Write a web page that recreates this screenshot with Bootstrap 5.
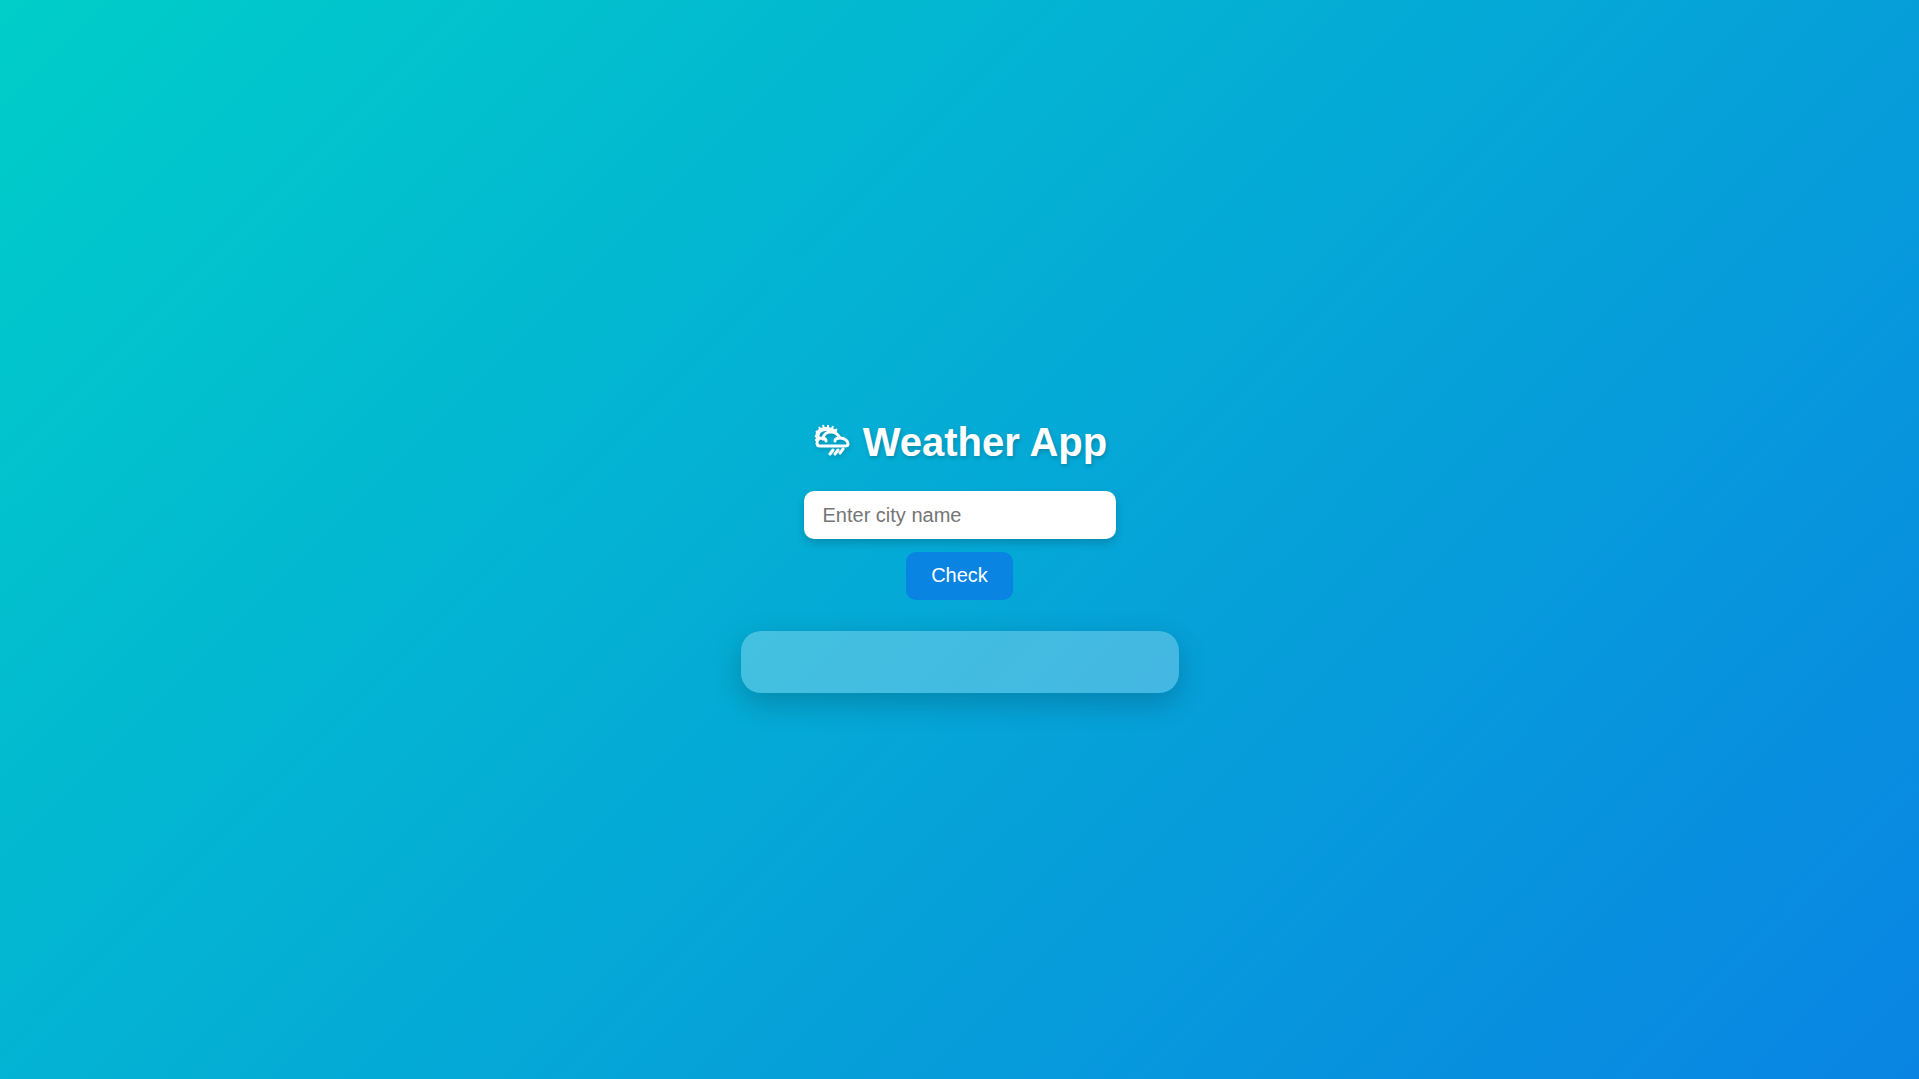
<!DOCTYPE html>
<html lang="en">
<head>
<meta charset="utf-8">
<meta name="viewport" content="width=device-width, initial-scale=1">
<title>Weather App</title>
<link href="https://cdn.jsdelivr.net/npm/bootstrap@5.3.0/dist/css/bootstrap.min.css" rel="stylesheet">
<style>
body { font-family: "Liberation Sans", Arial, sans-serif; background: linear-gradient(135deg, #00cec9, #0984e3); }
.app-title { font-size: 40px; line-height: 46px; margin: 32px 0 26px; text-shadow: 1px 2px 4px rgba(0,0,0,.2); }
.app-title svg { width: 40px; height: 40px; margin-right: 11px; filter: drop-shadow(1px 2px 2px rgba(0,0,0,.15)); }
.search-form { gap: 13px; margin-bottom: 31px; }
.city-input, .check-btn { font-size: 20px; line-height: 24px; border-radius: 10px; }
.city-input { width: 312px; max-width: 100%; padding: 12px 19px; box-shadow: 0 4px 8px rgba(0,0,0,.18); }
.city-input::placeholder { color: #757575; }
.check-btn { padding: 11px 25px 13px; background: #0984e3; }
.check-btn:hover { background: #0769b5; }
.result-panel { width: 438px; max-width: 100%; padding: 31px; border-radius: 20px; background: rgba(255,255,255,.25); box-shadow: 0 10px 30px rgba(0,0,0,.2); }
</style>
</head>
<body>
<main class="min-vh-100 d-flex flex-column align-items-center justify-content-center text-white">
  <h1 class="app-title d-flex align-items-center fw-bold">
    <svg viewBox="0 0 40 40" fill="none" stroke="#fff" stroke-linecap="round" stroke-linejoin="round" aria-hidden="true">
      <path d="M6 16C4 11 8 7 14 7c4 0 7 1 9 3" stroke-width="4"/>
      <path d="M6 18H3M5 15l-2-1M6 11L4 9M9 8L7 5M12 6l-1-3M16 6V3M20 7l1-3M23 9l2-2" stroke-width="2" stroke-linecap="butt"/>
      <path d="M11 17c0-4 3-7 8-7 4 0 7 2 9 6 5 0 8 3 8 6 0 1-1 2-3 2H8c-2 0-3-1-3-3 0-3 2-5 5-5s4 1 4 3M23 19c0-2 2-3 5-3" stroke-width="3"/>
      <path d="M21 28l-3 4M26 28l-3 4M31 27l-3 4" stroke-width="3"/>
    </svg>
    <span>Weather App</span>
  </h1>
  <form class="search-form d-flex flex-column align-items-center">
    <input class="city-input form-control border-0" id="city" type="text" placeholder="Enter city name" aria-label="City name">
    <button class="check-btn btn border-0 text-white" type="button">Check</button>
  </form>
  <section class="result-panel" aria-live="polite" aria-label="Weather result"></section>
</main>
<script src="https://cdn.jsdelivr.net/npm/bootstrap@5.3.0/dist/js/bootstrap.bundle.min.js"></script>
</body>
</html>
